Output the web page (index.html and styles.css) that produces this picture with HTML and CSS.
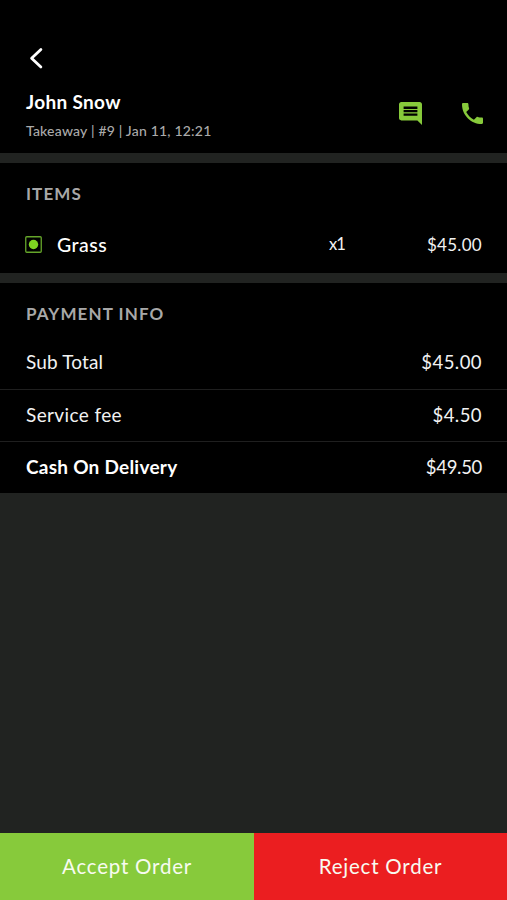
FILE: index.html
```html
<!DOCTYPE html>
<html lang="en">
<head>
<meta charset="utf-8">
<title>Order details</title>
<link rel="stylesheet" href="styles.css">
</head>
<body>
<div class="screen">
  <header class="header">
    <svg class="back" viewBox="0 0 20 24"><path d="M14.900 3.500 5.600 12.200l9.300 8.700"/></svg>
    <div class="customer-row">
      <div class="customer">
        <h1 class="name">John Snow</h1>
        <p class="meta">Takeaway | #9 | Jan 11, 12:21</p>
      </div>
      <div class="actions">
        <svg class="icon" viewBox="2 2 20 20"><path d="M21.990 4c0-1.100-.89-2-1.990-2H4c-1.100 0-2 .9-2 2v12c0 1.100.9 2 2 2h14l4 4-.01-18zM18 14H6v-2h12v2zm0-3H6V9h12v2zm0-3H6V6h12v2z"/></svg>
        <svg class="icon phone" viewBox="3 3 18 18"><path d="M6.620 10.790c1.440 2.830 3.760 5.140 6.590 6.590l2.200-2.200c.27-.27.67-.36 1.020-.24 1.120.37 2.330.57 3.570.57.55 0 1 .45 1 1V20c0 .55-.45 1-1 1-9.390 0-17-7.610-17-17 0-.55.45-1 1-1h3.500c.55 0 1 .45 1 1 0 1.250.2 2.450.57 3.570.11.35.03.74-.25 1.020l-2.200 2.200z"/></svg>
      </div>
    </div>
  </header>
  <section class="items">
    <h2 class="section-title">ITEMS</h2>
    <div class="item">
      <svg class="veg" viewBox="0 0 17 17"><rect x=".75" y=".75" width="15.500" height="15.500" rx="1"/><circle cx="8.500" cy="8.500" r="4.700"/></svg>
      <span class="item-name">Grass</span>
      <span class="qty">x1</span>
      <span class="item-price">$45.00</span>
    </div>
  </section>
  <section class="payment">
    <h2 class="section-title">PAYMENT INFO</h2>
    <div class="line first"><span class="subtotal">Sub Total</span><span class="amount">$45.00</span></div>
    <div class="line"><span class="fee">Service fee</span><span class="amount">$4.50</span></div>
    <div class="line"><span class="total">Cash On Delivery</span><span class="amount amount-total">$49.50</span></div>
  </section>
  <main class="rest"></main>
  <footer class="buttons">
    <button class="btn accept">Accept Order</button>
    <button class="btn reject">Reject Order</button>
  </footer>
</div>
</body>
</html>
```
FILE: styles.css
```css
* { box-sizing: border-box; }
body { margin: 0; background: #212321; color: #f2f2f2; font-family: Lato, "Open Sans", sans-serif; }
h1, h2, p { margin: 0; }
.screen { height: 900px; display: flex; flex-direction: column; }
.header { height: 153px; padding: 46px 24px 0 26px; background: #000; }
.back { display: block; width: 20px; height: 24px; fill: none; stroke: #fff; stroke-width: 2.800; stroke-linecap: round; stroke-linejoin: round; }
.customer-row { display: flex; justify-content: space-between; padding-top: 20px; }
.name { font-size: 19px; line-height: 24px; font-weight: 700; letter-spacing: .33px; color: #fff; }
.meta { margin-top: 8px; font-size: 14px; line-height: 18px; font-weight: 500; letter-spacing: .2px; color: #aaa; }
.actions { display: flex; gap: 40px; padding-top: 12px; }
.icon { width: 23px; height: 23px; fill: #87ca3b; }
.phone { width: 21px; height: 21px; margin-top: 1px; }
.items { height: 110px; margin-top: 10px; padding: 19px 25px 0 26px; background: #000; }
.section-title { font-size: 17px; line-height: 24px; font-weight: 700; letter-spacing: 1.080px; color: #a8a8a8; }
.item { display: grid; grid-template-columns: 31px 272px 1fr auto; align-items: center; height: 26px; margin-top: 25px; }
.veg { width: 17px; height: 17px; margin: 1px 0 0 -1px; fill: none; stroke: #65a52a; stroke-width: 1.300; }
.veg circle { fill: #7ed321; stroke: none; }
.item-name { justify-self: start; font-size: 19.500px; font-weight: 500; letter-spacing: .5px; color: #fff; }
.qty { justify-self: start; margin-top: -1px; font-size: 16.500px; letter-spacing: -1px; }
.item-price { font-size: 17px; letter-spacing: .3px; }
.payment { height: 210px; margin-top: 10px; padding-top: 19px; background: #000; }
.payment .section-title { padding-left: 26px; }
.line { display: flex; justify-content: space-between; align-items: center; height: 52px; padding: 0 25px 2px 26px; border-top: 1px solid #1f1f1f; font-size: 19px; }
.first { height: 53px; margin-top: 10px; border-top: 0; }
.subtotal { letter-spacing: .15px; }
.fee { letter-spacing: .38px; }
.total { font-weight: 700; letter-spacing: .25px; color: #fff; }
.amount { font-size: 18.500px; letter-spacing: .45px; }
.amount-total { letter-spacing: -.3px; }
.rest { flex: 1; }
.buttons { display: grid; grid-template-columns: 254px 253px; height: 67px; }
.btn { border: 0; padding: 0 0 2px; color: #f8fbf0; font: 400 20.500px/24px Lato, "Open Sans", sans-serif; letter-spacing: .78px; }
.accept { background: #87ca3b; }
.reject { background: #eb1e20; }
```
